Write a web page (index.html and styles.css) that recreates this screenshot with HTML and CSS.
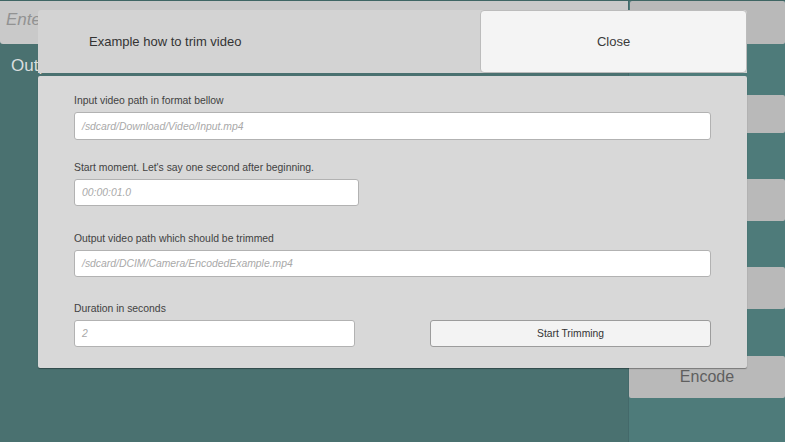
FILE: index.html
```html
<!DOCTYPE html>
<html>
<head>
<meta charset="utf-8">
<link rel="stylesheet" href="styles.css">
</head>
<body>
<div class="app">
  <div class="main">
    <div class="cmd-input"><span class="cmd-ph">Enter Command</span></div>
    <div class="out-label">Output</div>
  </div>
  <div class="side">
    <div class="side-btn side-top"></div>
    <div class="side-btn side-1"></div>
    <div class="side-btn side-2"></div>
    <div class="side-btn side-3"></div>
    <div class="side-btn side-4">Encode</div>
  </div>
</div>

<div class="dialog">
  <div class="dlg-head">
    <div class="dlg-title">Example how to trim video</div>
    <div class="dlg-close">Close</div>
  </div>
  <div class="dlg-body">
    <div class="field f1">
      <div class="label">Input video path in format bellow</div>
      <div class="textbox"><span class="ph">/sdcard/Download/Video/Input.mp4</span></div>
    </div>
    <div class="field f2">
      <div class="label">Start moment. Let's say one second after beginning.</div>
      <div class="textbox short"><span class="ph">00:00:01.0</span></div>
    </div>
    <div class="field f3">
      <div class="label">Output video path which should be trimmed</div>
      <div class="textbox"><span class="ph">/sdcard/DCIM/Camera/EncodedExample.mp4</span></div>
    </div>
    <div class="row">
      <div class="field f4">
        <div class="label">Duration in seconds</div>
        <div class="textbox half"><span class="ph">2</span></div>
      </div>
      <div class="btn">Start Trimming</div>
    </div>
  </div>
</div>
</body>
</html>
```

FILE: styles.css
```css
html, body {
  margin: 0;
  padding: 0;
  width: 785px;
  height: 442px;
  overflow: hidden;
  font-family: "Liberation Sans", Arial, sans-serif;
}
body {
  background: #3f6664;
}
.app {
  display: flex;
  height: 441px;
  margin-top: 1px;
}
.main {
  width: 628px;
  background: #4a7170;
  border-right: 1px solid #44696a;
}
.cmd-input {
  height: 43px;
  background: #c9c9c9;
  border-radius: 0 0 3px 3px;
  display: flex;
  align-items: center;
  padding-left: 6px;
  box-sizing: border-box;
}
.cmd-ph {
  font-style: italic;
  font-size: 17px;
  color: #929292;
  margin-top: -6px;
}
.out-label {
  font-size: 17px;
  color: #d9dede;
  padding-left: 11px;
  margin-top: 12px;
}
.side {
  flex: 1;
  background: #4e7b7a;
  display: flex;
  flex-direction: column;
}
.side-btn {
  background: #b9b9b9;
  border-radius: 2px;
  height: 42px;
  display: flex;
  align-items: center;
  justify-content: center;
  font-size: 16px;
  color: #5f5f5f;
}
.side-top {
  height: 43px;
  margin-left: 1px;
}
.side-1 { margin-top: 51px; height: 38px; }
.side-2 { margin-top: 46px; }
.side-3 { margin-top: 46px; }
.side-4 { margin-top: 47px; }

.dialog {
  position: absolute;
  left: 38px;
  top: 10px;
  width: 709px;
}
.dlg-head {
  display: flex;
  height: 63px;
  background: #d3d3d3;
  border-radius: 3px 3px 0 0;
}
.dlg-title {
  flex: 1;
  display: flex;
  align-items: center;
  padding-left: 51px;
  font-size: 13px;
  color: #333;
}
.dlg-close {
  width: 267px;
  background: #f4f4f4;
  border: 1px solid #bcbcbc;
  border-radius: 4px;
  box-sizing: border-box;
  display: flex;
  align-items: center;
  justify-content: center;
  font-size: 13px;
  color: #3a3a3a;
}
.dlg-body {
  margin-top: 3px;
  height: 292px;
  box-sizing: border-box;
  background: #d8d8d8;
  border-radius: 2px;
  box-shadow: 0 1px 1px rgba(0,0,0,0.35);
  padding: 19px 36px 0 36px;
}
.field {
  display: flex;
  flex-direction: column;
  gap: 5px;
}
.f1 { margin-bottom: 22px; }
.f2 { margin-bottom: 27px; }
.f3 { margin-bottom: 26px; }
.label {
  font-size: 10.4px;
  line-height: 12px;
  color: #424242;
}
.textbox {
  height: 27px;
  box-sizing: border-box;
  background: #fff;
  border: 1px solid #b2b2b2;
  border-radius: 3px;
  display: flex;
  align-items: center;
  padding-left: 7px;
}
.f1 .textbox { height: 28px; }
.short { width: 285px; }
.half { width: 281px; }
.ph {
  font-style: italic;
  font-size: 10.4px;
  color: #a9a9a9;
}
.row {
  display: flex;
  justify-content: space-between;
  align-items: flex-end;
}
.btn {
  width: 281px;
  height: 27px;
  box-sizing: border-box;
  background: #f3f3f3;
  border: 1px solid #9c9c9c;
  border-radius: 3px;
  display: flex;
  align-items: center;
  justify-content: center;
  font-size: 10.3px;
  color: #333;
}
```
